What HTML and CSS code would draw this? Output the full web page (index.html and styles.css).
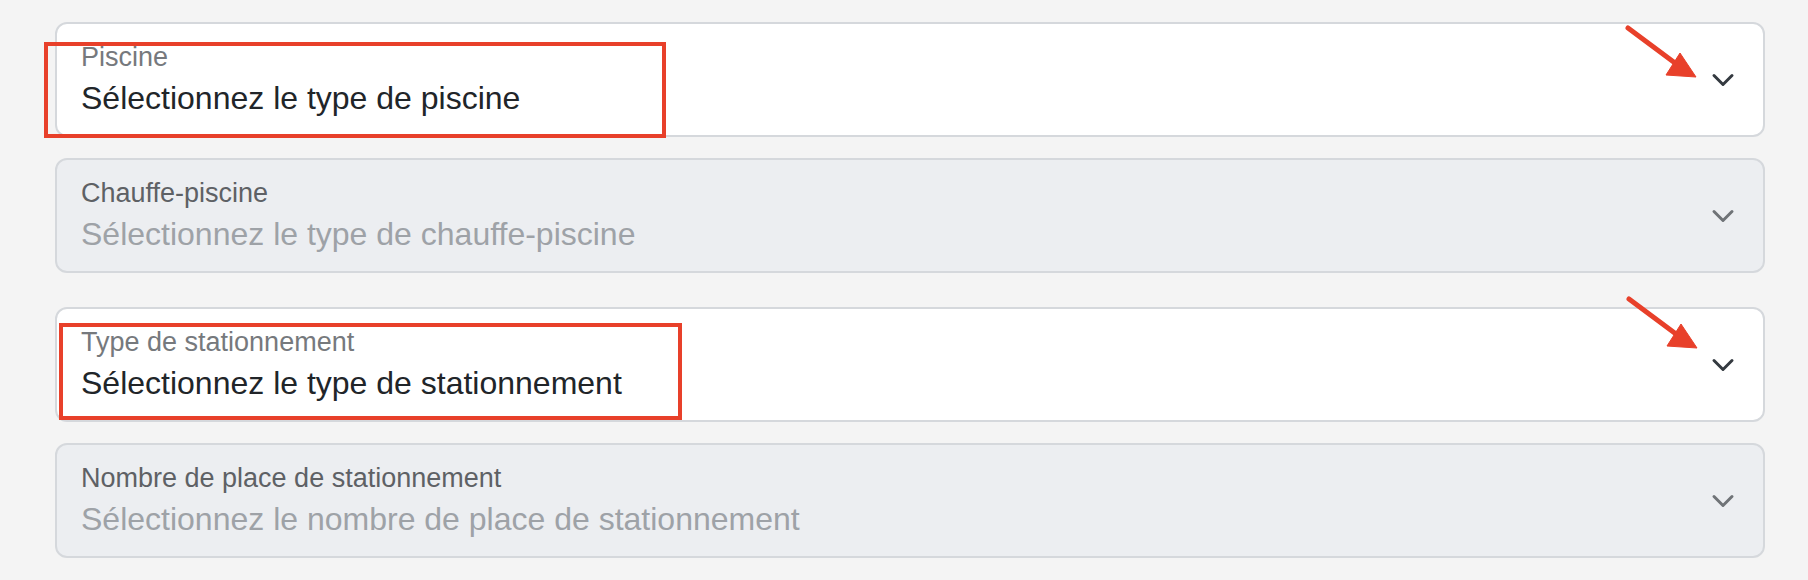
FILE: index.html
```html
<!DOCTYPE html>
<html lang="fr">
<head>
<meta charset="utf-8">
<title>Formulaire</title>
<link rel="stylesheet" href="styles.css">
</head>
<body>
<main class="form">
  <div class="field gap-sm">
    <div class="field-text">
      <div class="label">Piscine</div>
      <div class="value">Sélectionnez le type de piscine</div>
    </div>
    <svg class="chevron" viewBox="0 0 32 24" width="32" height="24"><path d="M7 7.5 L16 16.5 L25 7.5" fill="none" stroke="#343a40" stroke-width="3" stroke-linecap="round" stroke-linejoin="round"/></svg>
  </div>
  <div class="field disabled gap-lg">
    <div class="field-text">
      <div class="label">Chauffe-piscine</div>
      <div class="value">Sélectionnez le type de chauffe-piscine</div>
    </div>
    <svg class="chevron" viewBox="0 0 32 24" width="32" height="24"><path d="M7 7.5 L16 16.5 L25 7.5" fill="none" stroke="#6f7377" stroke-width="3" stroke-linecap="round" stroke-linejoin="round"/></svg>
  </div>
  <div class="field gap-sm">
    <div class="field-text">
      <div class="label">Type de stationnement</div>
      <div class="value">Sélectionnez le type de stationnement</div>
    </div>
    <svg class="chevron" viewBox="0 0 32 24" width="32" height="24"><path d="M7 7.5 L16 16.5 L25 7.5" fill="none" stroke="#343a40" stroke-width="3" stroke-linecap="round" stroke-linejoin="round"/></svg>
  </div>
  <div class="field disabled">
    <div class="field-text">
      <div class="label">Nombre de place de stationnement</div>
      <div class="value">Sélectionnez le nombre de place de stationnement</div>
    </div>
    <svg class="chevron" viewBox="0 0 32 24" width="32" height="24"><path d="M7 7.5 L16 16.5 L25 7.5" fill="none" stroke="#6f7377" stroke-width="3" stroke-linecap="round" stroke-linejoin="round"/></svg>
  </div>
</main>

<div class="annot box-one"></div>
<div class="annot box-two"></div>
<svg class="arrows" viewBox="0 0 1808 580" width="1808" height="580">
  <g fill="#e8402a" stroke="#e8402a">
    <line x1="1628" y1="28" x2="1675" y2="63" stroke-width="5" stroke-linecap="round"/>
    <polygon points="1666,75 1680,53 1696,77" stroke-width="1"/>
    <line x1="1629" y1="299" x2="1676" y2="334" stroke-width="5" stroke-linecap="round"/>
    <polygon points="1667,346 1681,324 1697,348" stroke-width="1"/>
  </g>
</svg>
</body>
</html>
```

FILE: styles.css
```css
html, body {
  margin: 0;
  padding: 0;
}

body {
  background: #f4f4f4;
  font-family: "Liberation Sans", Arial, sans-serif;
  width: 1808px;
  height: 580px;
  position: relative;
  overflow: hidden;
}

.form {
  padding: 22px 43px 0 55px;
  display: flex;
  flex-direction: column;
}

.field {
  box-sizing: border-box;
  height: 115px;
  background: #ffffff;
  border: 2px solid #d5d8dc;
  border-radius: 12px;
  display: flex;
  align-items: center;
  padding: 0 24px;
  margin-bottom: 22px;
}

.field.gap-sm {
  margin-bottom: 21px;
}

.field.gap-lg {
  margin-bottom: 34px;
}

.field-text {
  flex: 1;
  align-self: flex-start;
  padding-top: 17px;
}

.label {
  font-size: 27px;
  line-height: 32px;
  color: #76797d;
}

.value {
  margin-top: 5px;
  font-size: 32px;
  line-height: 40px;
  color: #212529;
}

.field.disabled {
  background: #eceef1;
}

.field.disabled .label {
  color: #5e6165;
}

.field.disabled .value {
  color: #9ea2a7;
}

.chevron {
  flex: none;
  display: block;
}

.annot {
  position: absolute;
  box-sizing: border-box;
  border: 4px solid #e8402a;
}

.box-one {
  left: 44px;
  top: 42px;
  width: 622px;
  height: 96px;
}

.box-two {
  left: 59px;
  top: 323px;
  width: 623px;
  height: 97px;
}

.arrows {
  position: absolute;
  left: 0;
  top: 0;
  pointer-events: none;
}
```
